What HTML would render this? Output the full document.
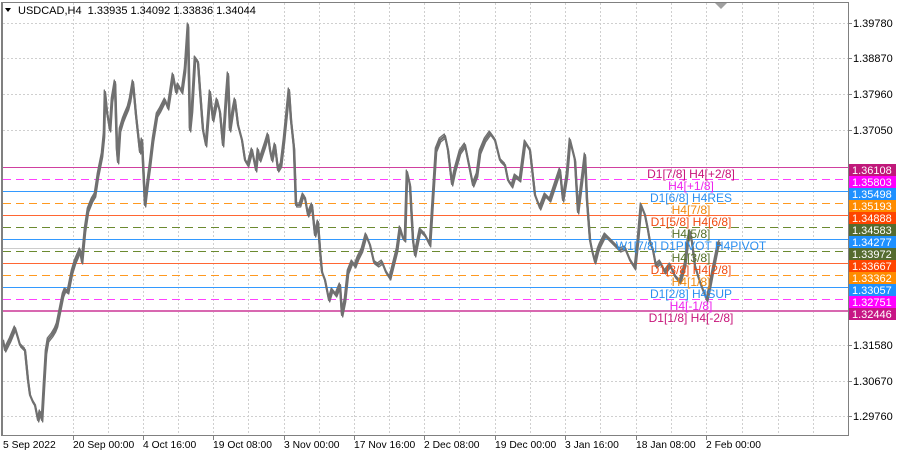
<!DOCTYPE html>
<html><head><meta charset="utf-8"><style>
html,body{margin:0;padding:0;background:#fff;width:900px;height:455px;overflow:hidden}
svg{display:block;font-family:"Liberation Sans",sans-serif}
.lv{shape-rendering:crispEdges}
</style></head><body>
<svg width="900" height="455" viewBox="0 0 900 455" xmlns="http://www.w3.org/2000/svg">
<defs>
<polyline id="pr" fill="none" stroke-linejoin="round" points="3,340 5,350 10,340 15,328 18,338 20,345 25,350 28,380 30,395 33,402 35,405 38,420 40,412 42,420 44,385 46,352 48,340 52,335 55,330 57,325 60,310 63,295 65,290 68,292 72,272 75,262 78,255 80,250 82,262 85,230 88,210 92,200 95,195 98,175 100,165 102,155 104,135 105,92 107,112 110,130 112,100 115,82 117,150 118,162 120,130 123,120 125,115 128,108 130,100 133,82 136,115 140,152 142,140 145,205 148,180 150,165 153,140 157,115 160,110 165,100 168,108 170,95 173,75 176,92 178,85 182,92 185,70 188,25 190,130 192,110 195,58 198,62 200,90 203,130 206,145 208,120 210,92 213,120 217,100 220,112 223,145 226,100 228,74 230,130 233,110 235,100 238,125 242,140 245,160 248,165 252,150 256,170 258,150 260,160 265,145 268,135 270,150 272,160 275,145 278,170 281,165 284,140 287,110 289,90 291,120 294,148 296,205 300,205 303,195 305,198 308,215 312,205 315,235 318,222 320,250 322,272 325,280 329,300 332,290 336,295 338,290 340,285 342,315 345,300 348,272 352,262 355,266 358,258 362,250 366,235 370,245 374,262 378,265 382,262 386,272 390,278 394,262 397,250 400,228 403,238 405,240 407,172 410,185 413,240 415,255 418,240 420,230 425,235 430,245 433,197 436,150 440,140 445,136 448,150 452,184 455,170 460,152 465,145 470,170 473,185 477,175 480,152 485,140 490,133 495,140 500,160 505,165 508,180 512,186 515,176 520,180 525,142 530,150 535,195 540,208 545,195 550,200 555,185 560,170 563,200 567,175 570,140 575,160 578,212 582,180 585,155 587,200 590,240 592,250 595,262 598,250 600,245 605,235 610,240 615,245 620,250 625,248 630,260 635,268 638,240 641,205 645,215 648,230 650,242 653,250 656,266 660,262 665,272 670,265 675,276 680,282 685,265 688,240 690,232 692,242 695,266 700,282 703,290 707,300 710,286 713,270 716,255 718,245 720,242"/>
</defs>
<rect width="900" height="455" fill="#fff"/>
<g style="stroke:#cfcfcf" stroke-width="1" stroke-dasharray="2,2">
<line x1="3" x2="848" y1="23.5" y2="23.5"/><line x1="3" x2="848" y1="58.5" y2="58.5"/><line x1="3" x2="848" y1="94.5" y2="94.5"/><line x1="3" x2="848" y1="130.5" y2="130.5"/><line x1="3" x2="848" y1="345.5" y2="345.5"/><line x1="3" x2="848" y1="381.5" y2="381.5"/><line x1="3" x2="848" y1="416.5" y2="416.5"/>
<line x1="73.5" x2="73.5" y1="3" y2="435"/><line x1="108.5" x2="108.5" y1="3" y2="435"/><line x1="143.5" x2="143.5" y1="3" y2="435"/><line x1="178.5" x2="178.5" y1="3" y2="435"/><line x1="213.5" x2="213.5" y1="3" y2="435"/><line x1="248.5" x2="248.5" y1="3" y2="435"/><line x1="284.5" x2="284.5" y1="3" y2="435"/><line x1="319.5" x2="319.5" y1="3" y2="435"/><line x1="354.5" x2="354.5" y1="3" y2="435"/><line x1="389.5" x2="389.5" y1="3" y2="435"/><line x1="424.5" x2="424.5" y1="3" y2="435"/><line x1="459.5" x2="459.5" y1="3" y2="435"/><line x1="495.5" x2="495.5" y1="3" y2="435"/><line x1="530.5" x2="530.5" y1="3" y2="435"/><line x1="565.5" x2="565.5" y1="3" y2="435"/><line x1="600.5" x2="600.5" y1="3" y2="435"/><line x1="636.5" x2="636.5" y1="3" y2="435"/><line x1="671.5" x2="671.5" y1="3" y2="435"/><line x1="706.5" x2="706.5" y1="3" y2="435"/><line x1="742.5" x2="742.5" y1="3" y2="435"/><line x1="778.5" x2="778.5" y1="3" y2="435"/><line x1="813.5" x2="813.5" y1="3" y2="435"/>
</g>
<!-- level lines -->
<g class="lv">
<rect x="3" y="167" width="845" height="1" fill="#d040a0"/>
<line x1="3" x2="848" y1="179.5" y2="179.5" stroke="#ff40ff" stroke-dasharray="8,5"/>
<rect x="3" y="191" width="845" height="1" fill="#3399ff"/>
<line x1="3" x2="848" y1="203.5" y2="203.5" stroke="#ff9920" stroke-dasharray="8,5"/>
<rect x="3" y="215" width="845" height="1" fill="#ff6633"/>
<line x1="3" x2="848" y1="227.5" y2="227.5" stroke="#6b8a30" stroke-dasharray="8,5"/>
<rect x="3" y="239" width="845" height="1" fill="#3399ff"/>
<rect x="3" y="248" width="845" height="1" fill="#cccccc"/>
<line x1="3" x2="848" y1="251.5" y2="251.5" stroke="#6b8a30" stroke-dasharray="8,5"/>
<rect x="3" y="263" width="845" height="1" fill="#ff6633"/>
<line x1="3" x2="848" y1="275.5" y2="275.5" stroke="#ff9920" stroke-dasharray="8,5"/>
<rect x="3" y="287" width="845" height="1" fill="#3399ff"/>
<line x1="3" x2="848" y1="299.5" y2="299.5" stroke="#ff40ff" stroke-dasharray="8,5"/>
<rect x="3" y="310" width="845" height="2" fill="#d868b0"/>
</g>
<!-- price -->
<g stroke="#707070">
<use href="#pr" stroke-width="1.3" transform="translate(0.7,2)"/>
<use href="#pr" stroke-width="1.3" transform="translate(-0.7,-2)"/>
<use href="#pr" stroke-width="2.2"/>
</g>
<!-- labels -->
<g font-size="12" text-anchor="middle">
<text x="691" y="178" fill="#c8157a">D1[7/8] H4[+2/8]</text>
<text x="691" y="190" fill="#ee22ee">H4[+1/8]</text>
<text x="691" y="202" fill="#2a8ff0">D1[6/8] H4RES</text>
<text x="691" y="214" fill="#f08a10">H4[7/8]</text>
<text x="691" y="226" fill="#f04a10">D1[5/8] H4[6/8]</text>
<text x="691" y="238" fill="#55702a">H4[5/8]</text>
<text x="691" y="250" fill="#2a8ff0">W1[7/8] D1PIVOT H4PIVOT</text>
<text x="691" y="262" fill="#55702a">H4[3/8]</text>
<text x="691" y="274" fill="#f04a10">D1[3/8] H4[2/8]</text>
<text x="691" y="286" fill="#f08a10">H4[1/8]</text>
<text x="691" y="298" fill="#2a8ff0">D1[2/8] H4SUP</text>
<text x="691" y="310" fill="#ee22ee">H4[-1/8]</text>
<text x="691" y="322" fill="#c8157a">D1[1/8] H4[-2/8]</text>
</g>
<!-- frame -->
<rect x="2.5" y="2.5" width="846" height="433" fill="none" stroke="#808080"/>
<rect x="1" y="2" width="2" height="434" fill="#808080"/>
<polygon points="715,3 727,3 721,9" fill="#a0a0a0"/>
<g stroke="#808080"><line x1="848" x2="852" y1="23.5" y2="23.5"/><line x1="848" x2="852" y1="58.5" y2="58.5"/><line x1="848" x2="852" y1="94.5" y2="94.5"/><line x1="848" x2="852" y1="130.5" y2="130.5"/><line x1="848" x2="852" y1="345.5" y2="345.5"/><line x1="848" x2="852" y1="381.5" y2="381.5"/><line x1="848" x2="852" y1="416.5" y2="416.5"/>
<line x1="73.5" x2="73.5" y1="435" y2="440"/><line x1="143.5" x2="143.5" y1="435" y2="440"/><line x1="213.5" x2="213.5" y1="435" y2="440"/><line x1="284.5" x2="284.5" y1="435" y2="440"/><line x1="354.5" x2="354.5" y1="435" y2="440"/><line x1="424.5" x2="424.5" y1="435" y2="440"/><line x1="495.5" x2="495.5" y1="435" y2="440"/><line x1="565.5" x2="565.5" y1="435" y2="440"/><line x1="636.5" x2="636.5" y1="435" y2="440"/><line x1="706.5" x2="706.5" y1="435" y2="440"/></g>
<g font-size="11" fill="#000">
<text x="853" y="27">1.39780</text><text x="853" y="62">1.38870</text><text x="853" y="98">1.37960</text><text x="853" y="134">1.37050</text><text x="853" y="349">1.31580</text><text x="853" y="385">1.30670</text><text x="853" y="420">1.29760</text>
</g>
<g font-size="10.3" fill="#000">
<text x="3" y="448">5 Sep 2022</text><text x="73" y="448">20 Sep 00:00</text><text x="143" y="448">4 Oct 16:00</text><text x="213" y="448">19 Oct 08:00</text><text x="284" y="448">3 Nov 00:00</text><text x="354" y="448">17 Nov 16:00</text><text x="424" y="448">2 Dec 08:00</text><text x="495" y="448">19 Dec 00:00</text><text x="565" y="448">3 Jan 16:00</text><text x="636" y="448">18 Jan 08:00</text><text x="706" y="448">2 Feb 00:00</text>
<text x="18" y="14" font-size="11">USDCAD,H4&#160;&#160;1.33935 1.34092 1.33836 1.34044</text>
</g>
<polygon points="5,8 11,8 8,12" fill="#000"/>
<!-- price boxes -->
<rect x="849" y="164" width="47" height="12" fill="#c0187a"/>
<rect x="849" y="176" width="47" height="12" fill="#ff00ff"/>
<rect x="849" y="188" width="47" height="12" fill="#1e90ff"/>
<rect x="849" y="200" width="47" height="12" fill="#ff8c00"/>
<rect x="849" y="212" width="47" height="12" fill="#ff4500"/>
<rect x="849" y="224" width="47" height="12" fill="#556b2f"/>
<rect x="849" y="236" width="47" height="12" fill="#1e90ff"/>
<rect x="849" y="248" width="47" height="12" fill="#556b2f"/>
<rect x="849" y="260" width="47" height="12" fill="#ff4500"/>
<rect x="849" y="272" width="47" height="12" fill="#ff8c00"/>
<rect x="849" y="284" width="47" height="12" fill="#1e90ff"/>
<rect x="849" y="296" width="47" height="12" fill="#ff00ff"/>
<rect x="849" y="308" width="47" height="12" fill="#c71585"/>
<g font-size="11" fill="#fff">
<text x="852" y="174">1.36108</text><text x="852" y="186">1.35803</text><text x="852" y="198">1.35498</text><text x="852" y="210">1.35193</text><text x="852" y="222">1.34888</text><text x="852" y="234">1.34583</text><text x="852" y="246">1.34277</text><text x="852" y="258">1.33972</text><text x="852" y="270">1.33667</text><text x="852" y="282">1.33362</text><text x="852" y="294">1.33057</text><text x="852" y="306">1.32751</text><text x="852" y="318">1.32446</text>
</g>
</svg>
</body></html>
